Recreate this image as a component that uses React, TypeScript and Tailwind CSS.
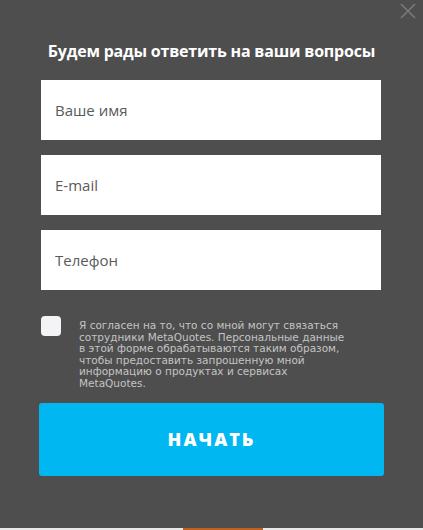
import { useState } from 'react';

const FIELDS = ['Ваше имя', 'E-mail', 'Телефон'];

const CONSENT = [
  'Я согласен на то, что со мной могут связаться',
  'сотрудники MetaQuotes. Персональные данные',
  'в этой форме обрабатываются таким образом,',
  'чтобы предоставить запрошенную мной',
  'информацию о продуктах и сервисах',
  'MetaQuotes.',
];

export default function App() {
  const [agree, setAgree] = useState(false);

  return (
    <div className="relative w-[423px] h-[530px] overflow-hidden bg-[#4e4e4e] font-['Open_Sans',sans-serif]">
      <button className="absolute right-[6px] top-[2px] text-[#7a7a7a]" aria-label="close">
        <svg width="18" height="18" viewBox="0 0 18 18" fill="none" stroke="currentColor" strokeWidth="1.6">
          <path d="M2 2 L16 16 M16 2 L2 16" />
        </svg>
      </button>

      <div className="flex flex-col px-[41px] pt-[39px]">
        <h2 className="text-center text-white font-bold text-[16px] leading-[24px] tracking-[-0.2px]">
          Будем рады ответить на ваши вопросы
        </h2>

        <div className="flex flex-col gap-[15px] mt-[17px] w-[340px]">
          {FIELDS.map(f => (
            <input key={f} placeholder={f}
              className="h-[60px] bg-white px-[14px] text-[15px] text-[#444] placeholder:text-[#5a5a5a] outline-none" />
          ))}
        </div>

        <label className="flex items-start gap-[18px] mt-[26px] cursor-pointer">
          <span onClick={() => setAgree(a => !a)}
            className="shrink-0 w-[20px] h-[20px] rounded-[4px] bg-[#f4f4f6] flex items-center justify-center text-[#00b6f0] text-xs">
            {agree ? '✓' : ''}
          </span>
          <span className="font-['DejaVu_Sans',sans-serif] text-[10.5px] leading-[11.6px] text-[#c4c4c4] pt-[4px] whitespace-nowrap">
            {CONSENT.map((l, i) => <span key={i} className="block">{l}</span>)}
          </span>
        </label>

        <button className="mt-[13px] -mx-[2px] h-[73px] rounded-[3px] bg-[#00b7f1] text-white font-extrabold text-[18px] tracking-[2px]">
          НАЧАТЬ
        </button>
      </div>

      <div className="absolute bottom-0 left-0 right-0 h-[2px] bg-[#e8e8e8]" />
      <div className="absolute bottom-0 left-[183px] w-[80px] h-[2px] bg-[#c0611f]" />
    </div>
  );
}
